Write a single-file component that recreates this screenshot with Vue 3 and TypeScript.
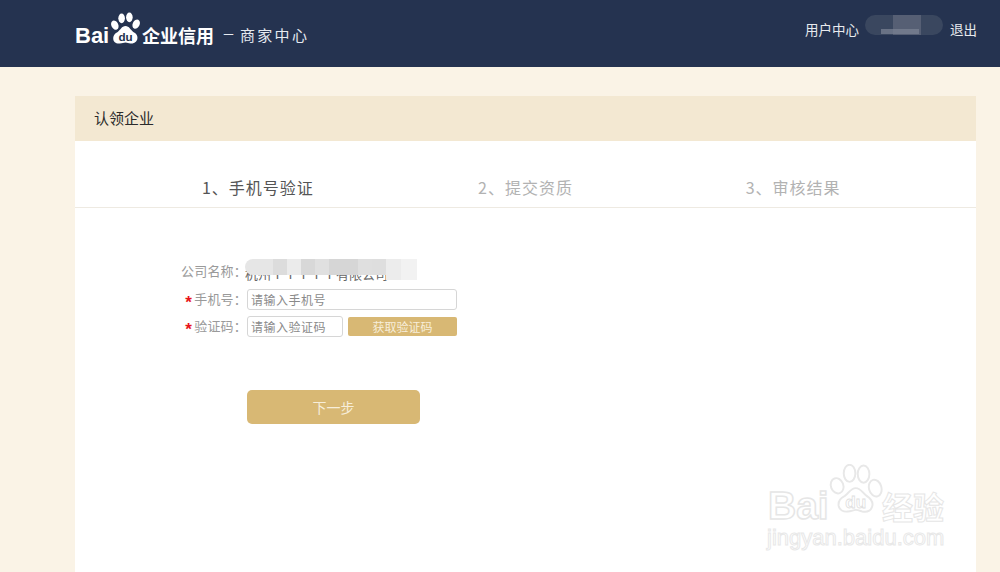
<script setup lang="ts">
const steps: { label: string; active: boolean }[] = [
  { label: '1、手机号验证', active: true },
  { label: '2、提交资质', active: false },
  { label: '3、审核结果', active: false },
]
const nameBlur: { w: number; c: string; tall?: boolean }[] = [
  { w: 28, c: '#e6e6e6' }, { w: 14, c: '#dcdcdc' }, { w: 14, c: '#ebebeb' }, { w: 14, c: '#d8d8d8' }, { w: 14, c: '#e0e0e0' },
  { w: 14, c: '#d6d6d6' }, { w: 15, c: '#d6d6d6' }, { w: 14, c: '#dfdfdf' }, { w: 14, c: '#dedede' }, { w: 15, c: '#ececec', tall: true }, { w: 16, c: '#f2f2f2', tall: true },
]
</script>

<template>
  <div class="page">
    <header class="topbar">
      <div class="brand">
        <span class="bai">Bai</span>
        <svg class="paw" width="34" height="34" viewBox="0 0 34 34">
          <ellipse cx="6" cy="13" rx="3.600" ry="5" fill="#fff" transform="rotate(-25 6 13)" />
          <ellipse cx="13" cy="6" rx="3.400" ry="5" fill="#fff" />
          <ellipse cx="21" cy="5" rx="3.400" ry="5" fill="#fff" />
          <ellipse cx="28" cy="12" rx="3.600" ry="5" fill="#fff" transform="rotate(25 28 12)" />
          <path d="M17 14c4 0 5 4 8 6 4 2 5 5 4 8-1 3-4 4-7 4-2 0-3-1-5-1s-3 1-6 1c-3 0-6-1-6.500-4-.5-3 .5-6 4.500-8 3-2 4-6 8-6z" fill="#fff" />
          <text x="17" y="29" text-anchor="middle" class="du">du</text>
        </svg>
        <span class="ent">企业信用</span>
        <span class="dash">－</span>
        <span class="sub">商家中心</span>
      </div>
      <nav class="user">
        <span class="user-link">用户中心</span>
        <span class="username">
          <span class="mask m1"></span>
          <span class="mask m2"></span>
          <span class="mask m3"></span>
        </span>
        <span class="user-link">退出</span>
      </nav>
    </header>

    <main class="main">
      <section class="card">
        <h1 class="card-head">认领企业</h1>
        <ol class="steps">
          <li v-for="s in steps" :key="s.label" class="step" :class="{ active: s.active }">{{ s.label }}</li>
        </ol>
        <form class="form" @submit.prevent>
          <div class="row name-row">
            <label class="label">公司名称：</label>
            <div class="name-value">
              <span class="name-text">杭州ⅠⅠⅠⅠⅠ有限公司</span>
              <div class="name-mask">
                <i v-for="(b, i) in nameBlur" :key="i" :class="{ tall: b.tall }" :style="{ width: b.w + 'px', background: b.c }"></i>
              </div>
            </div>
          </div>
          <div class="row">
            <label class="label"><em>*</em>手机号：</label>
            <input class="input phone" placeholder="请输入手机号" />
          </div>
          <div class="row code-row">
            <label class="label"><em>*</em>验证码：</label>
            <input class="input code" placeholder="请输入验证码" />
            <button class="code-btn" type="button">获取验证码</button>
          </div>
          <div class="row submit-row">
            <span class="label"></span>
            <button class="next" type="submit">下一步</button>
          </div>
        </form>
      </section>
    </main>

    <div class="watermark">
      <svg class="wm-paw" width="56" height="56" viewBox="0 0 72 72">
        <g fill="#fff" stroke="#e8e8e8" stroke-width="2.500">
          <ellipse cx="13" cy="28" rx="8" ry="10" transform="rotate(-20 13 28)" />
          <ellipse cx="29" cy="12" rx="7.500" ry="11" />
          <ellipse cx="47" cy="13" rx="7.500" ry="11" />
          <ellipse cx="62" cy="31" rx="8" ry="11" transform="rotate(-15 62 31)" />
          <path d="M37 31c7 0 9 7 14 10 6 4 9 8 7 14-2 6-8 7-13 6-3-1-5-2-8-2s-6 2-10 2c-6 1-11-2-12-7-1-6 2-10 8-13 5-3 7-10 14-10z" />
        </g>
        <text x="37" y="57" text-anchor="middle" class="wm-du">du</text>
      </svg>
      <span class="wm-bai">Bai</span>
      <span class="wm-jy">经验</span>
      <span class="wm-url">jingyan.baidu.com</span>
    </div>
  </div>
</template>

<style>
html, body { margin: 0; height: 100%; overflow: hidden; background: #faf3e6; }
</style>

<style scoped>
.page {
  position: relative;
  height: 572px;
  overflow: hidden;
  background: #faf3e6;
  font-family: "Noto Sans CJK SC", "Liberation Sans", sans-serif;
}
.topbar {
  height: 67px;
  background: #253350;
  display: flex;
  justify-content: space-between;
  padding: 0 23px 0 75px;
  box-sizing: border-box;
}
.brand { display: flex; align-items: flex-start; color: #fff; padding-top: 12px; height: 40px; }
.bai {
  font: bold 22px/24px "Liberation Sans", sans-serif;
  margin-top: 12px;
  width: 34px;
}
.paw { width: 33px; height: 34px; flex: none; }
.du { font: bold 12px "Liberation Sans", sans-serif; fill: #253350; }
.ent { font-size: 18px; line-height: 24px; font-weight: 700; margin-top: 11px; width: 73px; white-space: nowrap; }
.dash { font-size: 13px; line-height: 24px; margin-top: 10px; margin-left: 7px; width: 18px; color: #e6eaf0; }
.sub { font-size: 15px; line-height: 24px; margin-top: 11px; color: #e6eaf0; letter-spacing: 2.300px; }
.user {
  display: flex;
  align-items: flex-start;
  padding-top: 20px;
  color: #e8eaee;
  font-size: 13.500px;
  line-height: 18px;
}
.username { position: relative; display: block; width: 91px; height: 20px; }
.mask { position: absolute; display: block; }
.m1 { left: 6px; top: -5px; width: 78px; height: 20px; background: #3a475f; border-radius: 10px; }
.m2 { left: 34px; top: -5px; width: 28px; height: 20px; background: #565f74; }
.m3 { left: 22px; top: 9px; width: 38px; height: 5px; background: #7d8596; opacity: .7; }
.main { padding: 29px 24px 0 75px; }
.card { background: #fff; height: 520px; }
.card-head {
  margin: 0;
  height: 45px;
  background: #f3e8d2;
  padding-left: 19px;
  font-size: 15px;
  font-weight: 400;
  line-height: 44px;
  color: #2b2b2b;
}
.steps {
  list-style: none;
  margin: 0;
  padding: 34px 49px 0;
  height: 32px;
  display: grid;
  grid-template-columns: repeat(3, 1fr);
  border-bottom: 1px solid #eeeae2;
  box-sizing: content-box;
}
.step {
  text-align: center;
  font-size: 16px;
  line-height: 24px;
  letter-spacing: 1px;
  color: #b2b2b2;
}
.step.active { color: #555; }
.form { padding: 52px 0 0 70px; display: flex; flex-direction: column; }
.row { display: flex; align-items: center; height: 21px; margin-bottom: 6px; }
.name-row { height: 22px; margin-bottom: 7px; }
.label {
  width: 102px;
  flex: none;
  text-align: right;
  color: #9a9a9a;
  font-size: 13px;
  letter-spacing: 0.200px;
  line-height: 20px;
  height: 21px;
  font-weight: 400;
  white-space: nowrap;
}
.name-row .label { line-height: 22px; height: 22px; }
.label em {
  color: #e8141a;
  font: bold 17px/0 "Liberation Sans", sans-serif;
  vertical-align: -4px;
  margin-right: 2px;
}
.name-value { position: relative; width: 172px; height: 22px; margin-left: -2px; }
.name-text { color: #666; font-size: 13px; line-height: 22px; white-space: nowrap; }
.name-mask {
  position: absolute;
  left: 0;
  top: -1px;
  height: 21px;
  display: flex;
  align-items: flex-start;
}
.name-mask i { display: block; height: 16px; }
.name-mask i:first-child { border-radius: 8px 0 0 8px; }
.name-mask i.tall { height: 21px; }
.input {
  box-sizing: border-box;
  height: 21px;
  border: 1px solid #d6d6d6;
  border-radius: 3px;
  padding: 0 3px;
  outline: none;
  font: 12px "Noto Sans CJK SC", sans-serif;
  letter-spacing: 0.500px;
  background: #fff;
}
.input::placeholder { color: #8a8a8a; opacity: 1; }
.phone { width: 210px; }
.code { width: 96px; }
.code-btn {
  margin-left: 5px;
  width: 109px;
  height: 19px;
  padding: 0;
  border: none;
  border-radius: 2px;
  background: #d8b874;
  color: #f7eeda;
  font: 12px/19px "Noto Sans CJK SC", sans-serif;
}
.submit-row { height: 34px; margin-top: 47px; margin-bottom: 0; }
.next {
  width: 173px;
  height: 34px;
  padding: 0;
  border: none;
  border-radius: 5px;
  background: #d8b874;
  color: #f7eeda;
  font: 14px/34px "Noto Sans CJK SC", sans-serif;
}
.watermark { position: absolute; left: 766px; top: 464px; width: 190px; height: 92px; pointer-events: none; }
.wm-paw { position: absolute; left: 61px; top: 0; }
.wm-du { font: bold 22px "Liberation Sans", sans-serif; fill: #fff; stroke: #e0e0e0; stroke-width: 1; }
.wm-bai {
  position: absolute; left: 2px; top: 24px;
  font: bold 39px/36px "Liberation Sans", sans-serif;
  color: #fff;
  -webkit-text-stroke: 1.500px #e6e6e6;
}
.wm-jy {
  position: absolute; left: 116px; top: 24px;
  font-size: 31px; line-height: 36px; font-weight: 700;
  color: #fff;
  -webkit-text-stroke: 1px #e6e6e6;
}
.wm-url {
  position: absolute; left: 1px; top: 62px;
  font: 22px/24px "Liberation Sans", sans-serif;
  color: #fff;
  -webkit-text-stroke: 1px #e8e8e8;
  white-space: nowrap;
}
</style>
